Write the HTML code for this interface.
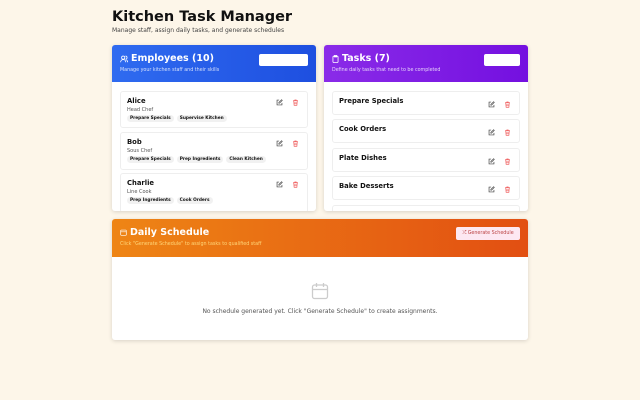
<!DOCTYPE html>
<html><head><meta charset="utf-8"><style>
*{box-sizing:border-box;margin:0;padding:0}
body{width:640px;height:400px;overflow:hidden;background:#fdf6e9;font-family:"DejaVu Sans","Liberation Sans",sans-serif;color:#111;position:relative}
h1{position:absolute;left:112px;top:9px;font-size:14.5px;font-weight:bold}
.sub{position:absolute;left:112px;top:27px;font-size:6px;color:#444}
.card{position:absolute;background:#fff;border-radius:3px;box-shadow:0 1px 4px rgba(0,0,0,.15);overflow:hidden}
.hd{position:relative;color:#fff;padding:8px 8px}
.hd b{font-size:9.5px;display:flex;align-items:center;gap:3px}
.hd small{font-size:4.8px;opacity:.8;display:block;margin-top:4px}
.btn{position:absolute;background:#fff;border-radius:2px}
.item{position:absolute;left:8px;right:8px;border:1px solid #eee;border-radius:3px;background:#fff}
.item .n{position:absolute;left:6px;top:5px;font-size:6.8px;font-weight:bold}
.item .r{position:absolute;left:6px;top:15px;font-size:5px;color:#555}
.tags{position:absolute;left:6px;top:23px;display:flex;gap:3px;line-height:1}
.tag{background:#f1f1f1;border-radius:5px;font-size:4.3px;font-weight:bold;padding:1.5px 3px}
.ic{position:absolute;top:7px}
</style></head><body>
<h1>Kitchen Task Manager</h1>
<div class="sub">Manage staff, assign daily tasks, and generate schedules</div>

<svg width="0" height="0" style="position:absolute"><defs>
<symbol id="ed" viewBox="0 0 10 10"><path d="M4.5 1.5H1.5v7h7V5.5" fill="none" stroke="#444" stroke-width="1"/><path d="M8 1 9 2 5 6H4V5z" fill="none" stroke="#444" stroke-width="0.9"/></symbol>
<symbol id="tr" viewBox="0 0 10 10"><path d="M1.5 2.5h7M4 2.5V1.3h2v1.2M2.5 2.5l.5 6.5h4l.5-6.5M4.2 4.5v3M5.8 4.5v3" fill="none" stroke="#e55" stroke-width="0.9"/></symbol>
</defs></svg>

<div class="card" style="left:112px;top:45px;width:204px;height:166px">
<div class="hd" style="height:37px;background:linear-gradient(90deg,#2f6bf0,#1e4fe0)"><b><svg width="8" height="8" viewBox="0 0 10 10" fill="none" stroke="#fff" stroke-width="1"><circle cx="4" cy="3.3" r="2"/><path d="M0.8 9c0-2 1.4-3.3 3.2-3.3S7.2 7 7.2 9M6.8 1.3a2 2 0 0 1 0 4M8 6c1 .6 1.4 1.6 1.4 3"/></svg>Employees (10)</b><small>Manage your kitchen staff and their skills</small>
<div class="btn" style="left:147px;top:9px;width:49px;height:12px"></div></div>
<div class="item" style="top:46px;height:37px"><div class="n">Alice</div><div class="r">Head Chef</div><div class="tags"><span class="tag">Prepare Specials</span><span class="tag">Supervise Kitchen</span></div><svg class="ic" style="left:155px" width="7" height="7"><use href="#ed"/></svg><svg class="ic" style="left:171px" width="7" height="7"><use href="#tr"/></svg></div>
<div class="item" style="top:87px;height:38px"><div class="n">Bob</div><div class="r">Sous Chef</div><div class="tags"><span class="tag">Prepare Specials</span><span class="tag">Prep Ingredients</span><span class="tag">Clean Kitchen</span></div><svg class="ic" style="left:155px" width="7" height="7"><use href="#ed"/></svg><svg class="ic" style="left:171px" width="7" height="7"><use href="#tr"/></svg></div>
<div class="item" style="top:128px;height:40px"><div class="n">Charlie</div><div class="r">Line Cook</div><div class="tags"><span class="tag">Prep Ingredients</span><span class="tag">Cook Orders</span></div><svg class="ic" style="left:155px" width="7" height="7"><use href="#ed"/></svg><svg class="ic" style="left:171px" width="7" height="7"><use href="#tr"/></svg></div>
</div>

<div class="card" style="left:324px;top:45px;width:204px;height:166px">
<div class="hd" style="height:37px;background:linear-gradient(90deg,#8a2be8,#7410e0)"><b><svg width="7" height="8" viewBox="0 0 8 10" fill="none" stroke="#fff" stroke-width="1"><rect x="0.8" y="1.5" width="6.4" height="8" rx="1"/><rect x="2.5" y="0.6" width="3" height="1.8"/></svg>Tasks (7)</b><small>Define daily tasks that need to be completed</small>
<div class="btn" style="left:160px;top:9px;width:36px;height:12px"></div></div>
<div class="item" style="top:46px;height:24px"><div class="n">Prepare Specials</div><svg class="ic" style="left:155px;top:9px" width="7" height="7"><use href="#ed"/></svg><svg class="ic" style="left:171px;top:9px" width="7" height="7"><use href="#tr"/></svg></div>
<div class="item" style="top:74px;height:24px"><div class="n">Cook Orders</div><svg class="ic" style="left:155px;top:9px" width="7" height="7"><use href="#ed"/></svg><svg class="ic" style="left:171px;top:9px" width="7" height="7"><use href="#tr"/></svg></div>
<div class="item" style="top:103px;height:24px"><div class="n">Plate Dishes</div><svg class="ic" style="left:155px;top:9px" width="7" height="7"><use href="#ed"/></svg><svg class="ic" style="left:171px;top:9px" width="7" height="7"><use href="#tr"/></svg></div>
<div class="item" style="top:131px;height:24px"><div class="n">Bake Desserts</div><svg class="ic" style="left:155px;top:9px" width="7" height="7"><use href="#ed"/></svg><svg class="ic" style="left:171px;top:9px" width="7" height="7"><use href="#tr"/></svg></div>
<div class="item" style="top:160px;height:24px"></div>
</div>

<div class="card" style="left:112px;top:219px;width:416px;height:121px">
<div class="hd" style="height:38px;background:linear-gradient(90deg,#ee8515,#e24f12)"><b><svg width="7" height="7" viewBox="0 0 10 10" fill="none" stroke="#fff" stroke-width="1"><rect x="1" y="1.5" width="8" height="7.5" rx="1"/><path d="M1 4h8"/></svg>Daily Schedule</b><small style="color:#ffd77a;opacity:1">Click "Generate Schedule" to assign tasks to qualified staff</small>
<div class="btn" style="left:344px;top:8px;width:64px;height:13px;background:#fde8f2;color:#b44;font-size:4.8px;text-align:center;line-height:13px">&#10542; Generate Schedule</div></div>
<svg style="position:absolute;left:199px;top:63px" width="18" height="18" viewBox="0 0 18 18" fill="none" stroke="#ccc" stroke-width="1.3"><rect x="1.5" y="3" width="15" height="13.5" rx="2"/><path d="M1.5 7.5h15M5.5 1v4M12.5 1v4"/></svg>
<div style="position:absolute;left:0;right:0;top:89px;text-align:center;font-size:6px;color:#555">No schedule generated yet. Click "Generate Schedule" to create assignments.</div>
</div>
</body></html>
